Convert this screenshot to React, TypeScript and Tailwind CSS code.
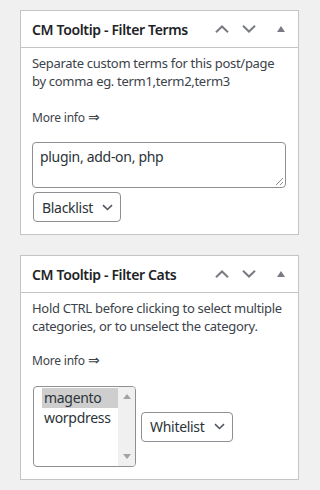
import React from "react";

const font = { fontFamily: '"Noto Sans", "Open Sans", sans-serif' };

function BoxControls() {
  return (
    <div className="flex items-center">
      <svg width="14" height="8" viewBox="0 0 14 8" className="mr-[13px]">
        <path d="M1 7.2 7 1.5l6 5.7" fill="none" stroke="#787c82" strokeWidth="2" />
      </svg>
      <svg width="14" height="8" viewBox="0 0 14 8" className="mr-[21px]">
        <path d="M1 0.8 7 6.5l6-5.7" fill="none" stroke="#787c82" strokeWidth="2" />
      </svg>
      <svg width="8" height="6" viewBox="0 0 8 6">
        <path d="M0 6 4 0l4 6z" fill="#787c82" />
      </svg>
    </div>
  );
}

function SelectBox({ label }: { label: string }) {
  return (
    <div className="inline-flex items-center h-[30px] border border-[#8c8f94] rounded-[4px] bg-white pl-[8px] pr-[7px] text-[14px] tracking-[-0.3px] text-[#2c3338]">
      <span className="mr-[9px]">{label}</span>
      <svg width="11" height="7" viewBox="0 0 11 7">
        <path d="M1 1.2 5.5 5.5 10 1.2" fill="none" stroke="#50575e" strokeWidth="1.6" />
      </svg>
    </div>
  );
}

function Postbox({ title, children }: { title: string; children: React.ReactNode }) {
  return (
    <div className="w-[279px] bg-white border border-[#c3c4c7]">
      <div className="h-[37px] flex items-center justify-between pl-[11px] pr-[13px] border-b border-[#c3c4c7]">
        <h2 className="text-[14px] font-semibold tracking-[-0.35px] text-[#1d2327]">{title}</h2>
        <BoxControls />
      </div>
      <div className="px-[11px] pb-[12px]">{children}</div>
    </div>
  );
}

export default function App() {
  return (
    <div className="min-h-[490px] bg-[#f0f0f1] pt-[10px] px-5" style={font}>
      {/* Filter Terms */}
      <Postbox title="CM Tooltip - Filter Terms">
        <p className="mt-[6px] text-[13px] leading-[18px] tracking-[-0.3px] text-[#3c434a]">
          Separate custom terms for this post/page by comma eg. term1,term2,term3
        </p>
        <p className="mt-[18px] text-[12px] leading-[18px] tracking-[-0.2px] text-[#3c434a]">
          More info <span className="text-[14px]">⇒</span>
        </p>
        <div className="relative mt-[15px] h-[46px] w-[254px] border border-[#8c8f94] rounded-[4px] px-[7px] pt-[3px] text-[14px] tracking-[-0.3px] text-[#2c3338]">
          plugin, add-on, php
          <svg width="9" height="9" viewBox="0 0 9 9" className="absolute right-[1px] bottom-[1px]">
            <path d="M8 1 1 8M8 5 5 8" stroke="#8c8f94" strokeWidth="1" />
          </svg>
        </div>
        <div className="mt-[4px] ml-[1px]">
          <SelectBox label="Blacklist" />
        </div>
      </Postbox>

      <div className="h-5" />

      {/* Filter Cats */}
      <Postbox title="CM Tooltip - Filter Cats">
        <p className="mt-[6px] text-[13px] leading-[18px] tracking-[-0.3px] text-[#3c434a]">
          Hold CTRL before clicking to select multiple categories, or to unselect the category.
        </p>
        <p className="mt-[16px] text-[12px] leading-[18px] tracking-[-0.2px] text-[#3c434a]">
          More info <span className="text-[14px]">⇒</span>
        </p>
        <div className="mt-[16px] flex items-center gap-[5px] ml-[1px]">
          <div className="flex h-[81px] w-[103px] border border-[#8c8f94] rounded-[4px] overflow-hidden">
            <div className="flex-1 pl-[8px] pt-[1px] text-[14px] tracking-[-0.3px] text-[#2c3338]">
              <div className="h-[20px] leading-[20px] bg-[#cecece] pl-[2px]">magento</div>
              <div className="h-[20px] leading-[20px] pl-[2px]">worpdress</div>
            </div>
            <div className="w-[17px] bg-[#f0f0f0] flex flex-col items-center justify-between py-[7px]">
              <svg width="8" height="5" viewBox="0 0 8 5">
                <path d="M0 5 4 0l4 5z" fill="#a3a3a3" />
              </svg>
              <svg width="8" height="5" viewBox="0 0 8 5">
                <path d="M0 0 4 5l4-5z" fill="#a3a3a3" />
              </svg>
            </div>
          </div>
          <SelectBox label="Whitelist" />
        </div>
      </Postbox>
    </div>
  );
}
